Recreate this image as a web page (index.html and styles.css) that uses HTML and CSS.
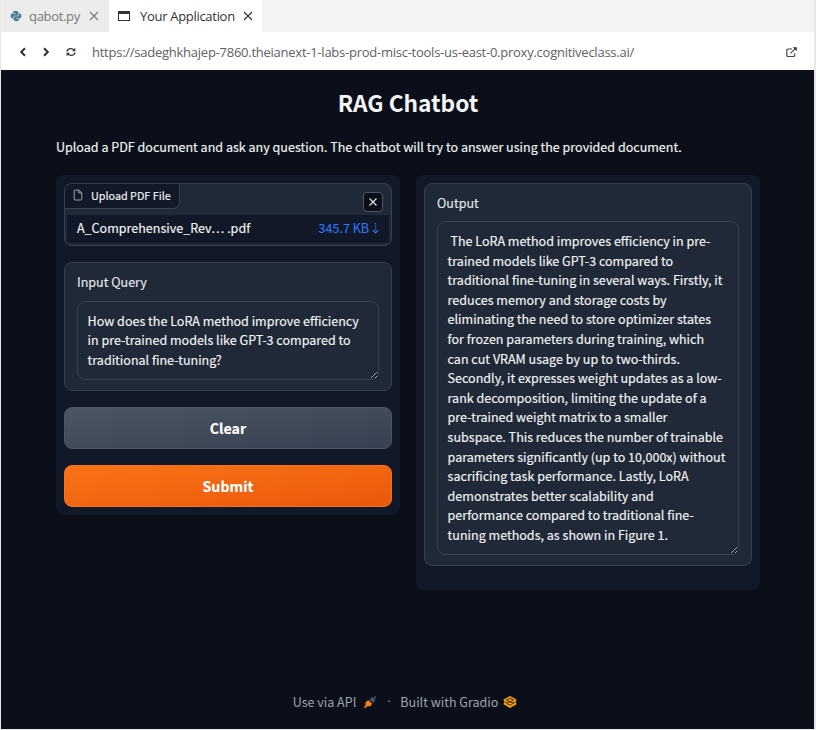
FILE: index.html
```html
<!DOCTYPE html>
<html lang="en">
<head>
<meta charset="utf-8">
<title>Your Application</title>
<link rel="stylesheet" href="styles.css">
</head>
<body>
<div class="window">
  <div class="tabs">
    <div class="tab">
      <svg class="tab-icon python" viewBox="0 0 12 12"><path fill="#4b7f98" d="M3 2.500Q3 .8 5.700.8T8.500 2.500v2.200q0 1-1.100 1H4.500Q3 5.700 3 7.200v1.200H2.200Q.6 8.400.6 6T2.400 3.600H6V3H3z"/><path fill="#4b7f98" d="M9 9.500q0 1.700-2.700 1.700T3.500 9.500V7.300q0-1 1.100-1h2.900Q9 6.300 9 4.800V3.600h.8q1.600 0 1.600 2.400T9.600 8.400H6V9h3z"/></svg>
      <span class="tab-name">qabot.py</span>
      <svg class="tab-close" viewBox="0 0 10 10"><path d="M1 1l8 8M9 1L1 9"/></svg>
    </div>
    <div class="tab active">
      <svg class="tab-icon" viewBox="0 0 12 12"><path fill="#333" d="M0 1h12v10H0zM1 4v6h10V4z" fill-rule="evenodd"/></svg>
      <span class="tab-name">Your Application</span>
      <svg class="tab-close" viewBox="0 0 10 10"><path d="M1 1l8 8M9 1L1 9"/></svg>
    </div>
  </div>
  <div class="toolbar">
    <svg class="nav" viewBox="0 0 10 10"><path d="M7 1.200L3.200 5 7 8.800"/></svg>
    <svg class="nav" viewBox="0 0 10 10"><path d="M3 1.200L6.800 5 3 8.800"/></svg>
    <svg class="nav refresh" viewBox="0 0 10 10"><path d="M1 4.500Q1.500 1.600 5 1.600q2 0 3.300 1.500M9 5.500Q8.500 8.400 5 8.400q-2 0-3.300-1.500"/><path class="tip" d="M9.400.8v3.400H6zM.6 9.200V5.800H4z"/></svg>
    <span class="url">https://sadeghkhajep-7860.theianext-1-labs-prod-misc-tools-us-east-0.proxy.cognitiveclass.ai/</span>
    <svg class="external" viewBox="0 0 11 11"><path d="M6 2H2Q.8 2 .8 3v5.500q0 1 1.200 1h5.500q1.200 0 1.200-1V6.500M4.500 6.300L9 1.800"/><path class="tip" d="M6.800.3h4v4z"/></svg>
  </div>
  <main class="app">
    <h1>RAG Chatbot</h1>
    <p class="description">Upload a PDF document and ask any question. The chatbot will try to answer using the provided document.</p>
    <div class="columns">
      <section class="panel">
        <div class="block file-block">
          <div class="file-top">
            <div class="file-label">
              <svg viewBox="0 0 12 12"><path d="M6.800 1H3.200q-1 0-1 1v8q0 1 1 1h5.600q1 0 1-1V4zM6.800 1v3h3"/></svg>
              <span>Upload PDF File</span>
            </div>
            <button class="remove" aria-label="Remove"><svg viewBox="0 0 10 10"><path d="M1.500 1.500l7 7M8.500 1.500l-7 7"/></svg></button>
          </div>
          <div class="file-row"><span class="file-name">A_Comprehensive_Rev… .pdf</span><a class="file-size">345.7 KB <svg viewBox="0 0 7 11"><path d="M3.500 0v8" stroke-dasharray="1.200 1"/><path d="M.8 7.200l2.700 2.700 2.700-2.700"/></svg></a></div>
        </div>
        <div class="block">
          <label class="label" for="query">Input Query</label>
          <textarea id="query" class="query" spellcheck="false">How does the LoRA method improve efficiency
in pre-trained models like GPT-3 compared to
traditional fine-tuning?</textarea>
        </div>
        <button class="button clear">Clear</button>
        <button class="button submit">Submit</button>
      </section>
      <section class="panel output-panel">
        <div class="block">
          <label class="label" for="output">Output</label>
          <textarea id="output" class="output" spellcheck="false"> The LoRA method improves efficiency in pre-
trained models like GPT-3 compared to
traditional fine-tuning in several ways. Firstly, it
reduces memory and storage costs by
eliminating the need to store optimizer states
for frozen parameters during training, which
can cut VRAM usage by up to two-thirds.
Secondly, it expresses weight updates as a low-
rank decomposition, limiting the update of a
pre-trained weight matrix to a smaller
subspace. This reduces the number of trainable
parameters significantly (up to 10,000x) without
sacrificing task performance. Lastly, LoRA
demonstrates better scalability and
performance compared to traditional fine-
tuning methods, as shown in Figure 1.</textarea>
        </div>
      </section>
    </div>
    <footer>
      <span>Use via API</span>
      <svg class="rocket" viewBox="0 0 14 14"><path fill="#475569" d="M6.500 4.500L9 2l1.500 1L12.500.8l.8.8L11.500 4l.8 1.500L9.800 8z"/><path fill="#f97f10" d="M5.200 5l4 4-2 2.200H4.500L2 13.300l-1-1 1.500-2V7.500z"/></svg>
      <span class="dot">·</span>
      <span>Built with Gradio</span>
      <svg class="gradio" viewBox="0 0 14 12"><path fill="#f9a008" d="M7 0l6.500 3.400L12.800 6l.7 2.200L7 12 .5 8.200 1.200 6 .5 3.400z"/><path fill="none" stroke="#1b1710" stroke-width=".8" d="M3.500 4L7 5.800 10.500 4 7 2.200zM1.500 5.800l2.200 1.200L7 5.800l3.500 1.500L7 9.200 3.700 7.500M10.300 7l2.200-1.200"/></svg>
    </footer>
  </main>
</div>
</body>
</html>
```

FILE: styles.css
```css
* { box-sizing: border-box; }
body {
  margin: 0;
  background: #e8e8e8;
  font-family: "Noto Sans CJK SC", "Open Sans", sans-serif;
}
svg { display: block; flex: none; }
.window {
  width: 813px;
  height: 729px;
  margin-left: 1px;
  display: flex;
  flex-direction: column;
}
.tabs {
  height: 32px;
  display: flex;
  background: #f3f3f3;
  font: 13px/32px "Open Sans", sans-serif;
  color: #333;
}
.tab {
  width: 108px;
  padding: 0 10px 0 9px;
  display: flex;
  align-items: center;
  background: #ececec;
  color: #777;
  letter-spacing: -0.32px;
}
.tab.active { width: 153px; padding-right: 9px; background: #fff; color: #333; }
.tab-icon { width: 12px; height: 12px; margin-right: 7px; }
.tab.active .tab-icon { margin-right: 10px; }
.tab-name { flex: 1; white-space: nowrap; }
.tab.active .tab-name { letter-spacing: -0.3px; }
.tab-close { width: 10px; height: 10px; fill: none; stroke: currentColor; stroke-width: 1.1; }
.toolbar {
  height: 38px;
  padding: 2px 17px 0 17px;
  display: flex;
  align-items: center;
  background: #fff;
}
.nav { width: 10px; height: 10px; margin-right: 13px; fill: none; stroke: #333; stroke-width: 2; }
.refresh { margin-right: 16px; margin-left: 2px; stroke-width: 1.4; }
.tip { fill: #333; stroke: none; }
.url { flex: 1; font: 13px/20px "Open Sans", sans-serif; letter-spacing: -0.25px; color: #616161; white-space: nowrap; }
.external { width: 11px; height: 11px; fill: none; stroke: #444; stroke-width: 1.2; }
.app {
  flex: 1;
  padding: 0 54px 0 55px;
  background: #0b0f19;
  color: #f3f4f6;
  display: flex;
  flex-direction: column;
  -webkit-text-stroke: 0.15px;
}
h1 {
  margin: 16px 0 0;
  text-align: center;
  font-size: 22.700px;
  line-height: 34px;
  font-weight: 600;
  -webkit-text-stroke: 0;
}
.description { margin: 17px 0 0; font-size: 12.540px; line-height: 20px; white-space: nowrap; }
.columns { display: flex; gap: 16px; margin-top: 18px; align-items: flex-start; }
.panel {
  width: 344px;
  padding: 8px;
  border-radius: 8px;
  background: #111827;
  display: flex;
  flex-direction: column;
  gap: 16px;
}
.output-panel { padding-bottom: 24px; }
.block {
  border: 1px solid #374151;
  border-radius: 8px;
  background: #1f2937;
  padding: 10px 12px;
}
.output-panel .block { padding-top: 9px; }
.file-block { height: 63px; padding: 0 2px 2px 0; }
.file-top { display: flex; justify-content: space-between; height: 31px; }
.file-label {
  width: 115px;
  height: 25px;
  padding-left: 7px;
  padding-bottom: 2px;
  display: flex;
  align-items: center;
  gap: 7px;
  border: solid #374151;
  border-width: 0 1px 1px 0;
  border-radius: 7px 0 7px 0;
  background: #111827;
  font-size: 10.800px;
  line-height: 16px;
  white-space: nowrap;
}
.file-label svg { width: 12px; height: 12px; fill: none; stroke: #9ca3af; stroke-width: 1; }
.remove {
  width: 20px;
  height: 20px;
  margin: 8px 6px 0 0;
  padding: 4px;
  border: 1px solid #4b5563;
  border-radius: 4px;
  background: #0b0f19;
}
.remove svg { width: 10px; height: 10px; fill: none; stroke: #e5e7eb; stroke-width: 1.1; }
.file-row {
  height: 28px;
  margin-left: 2px;
  padding: 0 10px 2px 10px;
  display: flex;
  justify-content: space-between;
  align-items: center;
  background: #111827;
  font-size: 12.540px;
  line-height: 20px;
}
.file-size { display: flex; align-items: center; gap: 3px; color: #2f74f5; }
.file-size svg { width: 7px; height: 11px; fill: none; stroke: currentColor; stroke-width: 1.3; }
.label {
  display: block;
  margin: -1px 0 9px;
  font-size: 12.540px;
  line-height: 19.600px;
  color: #e5e7eb;
}
.output-panel .label { margin-top: 0; margin-bottom: 8px; }
textarea {
  display: block;
  width: 302px;
  margin: 0;
  padding: 9px 9px 9px 9.600px;
  border: 1px solid #374151;
  border-radius: 8px;
  background: #1f2937;
  color: #f3f4f6;
  font: 12.540px/19.600px "Noto Sans CJK SC", sans-serif;
  white-space: pre;
  overflow: hidden;
  resize: vertical;
  -webkit-text-stroke: 0.15px;
}
.query { height: 79px; }
.output { height: 334px; padding-top: 9.400px; }
.button {
  height: 42px;
  padding: 0;
  border: 1px solid #4b5563;
  border-radius: 8px;
  color: #fff;
  font: 600 14.200px/24px "Noto Sans CJK SC", sans-serif;
}
.clear { background: linear-gradient(to bottom right, #4b5563, #374151); }
.submit { border-color: #f97316; background: linear-gradient(to bottom right, #f97316, #ea580c); }
footer {
  margin: auto 0 0 -6px;
  padding-bottom: 17px;
  display: flex;
  justify-content: center;
  align-items: center;
  font-size: 12.540px;
  line-height: 20px;
  color: #9ca3af;
  -webkit-text-stroke: 0;
}
.rocket { width: 14px; height: 14px; margin-left: 7px; }
.dot { width: 4px; margin: 0 9px 0 10px; font-family: "Open Sans", sans-serif; }
.gradio { width: 14px; height: 12px; margin-left: 5px; }
```
